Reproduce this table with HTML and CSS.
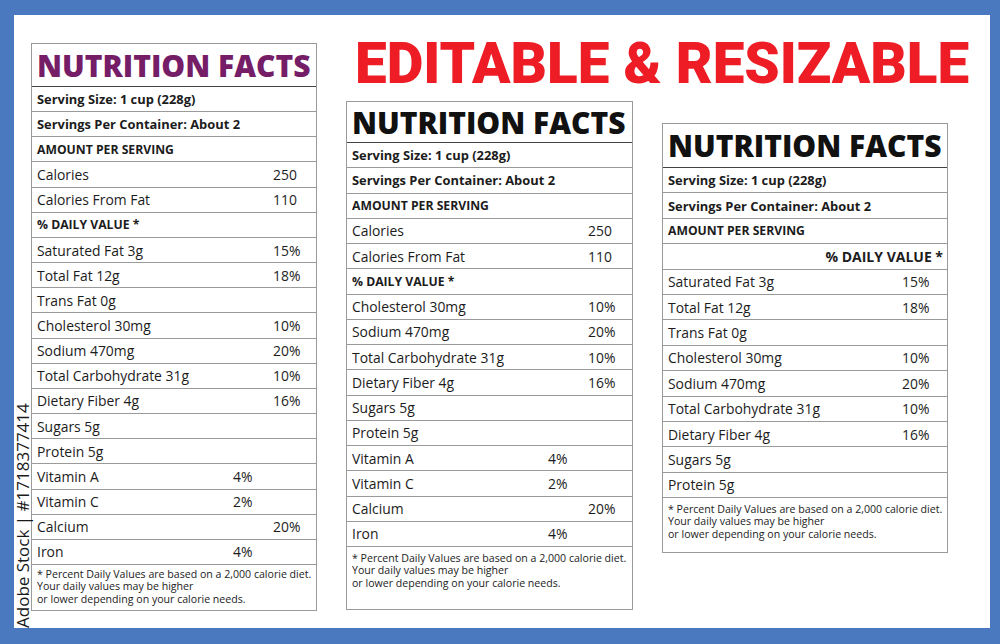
FILE: index.html
```html
<!DOCTYPE html>
<html lang="en">
<head>
<meta charset="utf-8">
<title>Nutrition Facts</title>
<link rel="stylesheet" href="styles.css">
</head>
<body>
<div class="frame">
  <section class="label l1">
    <h2 class="title purple">NUTRITION FACTS</h2>
    <div class="row b">Serving Size: 1 cup (228g)</div>
    <div class="row b">Servings Per Container: About 2</div>
    <div class="row b caps">AMOUNT PER SERVING</div>
    <div class="row"><span>Calories</span><span>250</span></div>
    <div class="row"><span>Calories From Fat</span><span>110</span></div>
    <div class="row b caps">% DAILY VALUE *</div>
    <div class="row"><span>Saturated Fat 3g</span><span>15%</span></div>
    <div class="row"><span>Total Fat 12g</span><span>18%</span></div>
    <div class="row"><span>Trans Fat 0g</span></div>
    <div class="row"><span>Cholesterol 30mg</span><span>10%</span></div>
    <div class="row"><span>Sodium 470mg</span><span>20%</span></div>
    <div class="row"><span>Total Carbohydrate 31g</span><span>10%</span></div>
    <div class="row"><span>Dietary Fiber 4g</span><span>16%</span></div>
    <div class="row"><span>Sugars 5g</span></div>
    <div class="row"><span>Protein 5g</span></div>
    <div class="row vit"><span>Vitamin A</span><span>4%</span></div>
    <div class="row vit"><span>Vitamin C</span><span>2%</span></div>
    <div class="row"><span>Calcium</span><span>20%</span></div>
    <div class="row vit"><span>Iron</span><span>4%</span></div>
    <p class="foot">* Percent Daily Values are based on a 2,000 calorie diet.<br>Your daily values may be higher<br>or lower depending on your calorie needs.</p>
  </section>
  <div class="right">
    <h1 class="headline">EDITABLE &amp; RESIZABLE</h1>
    <div class="pair">
      <section class="label l2">
        <h2 class="title">NUTRITION FACTS</h2>
        <div class="row b">Serving Size: 1 cup (228g)</div>
        <div class="row b">Servings Per Container: About 2</div>
        <div class="row b caps">AMOUNT PER SERVING</div>
        <div class="row"><span>Calories</span><span>250</span></div>
        <div class="row"><span>Calories From Fat</span><span>110</span></div>
        <div class="row b caps">% DAILY VALUE *</div>
        <div class="row"><span>Cholesterol 30mg</span><span>10%</span></div>
        <div class="row"><span>Sodium 470mg</span><span>20%</span></div>
        <div class="row"><span>Total Carbohydrate 31g</span><span>10%</span></div>
        <div class="row"><span>Dietary Fiber 4g</span><span>16%</span></div>
        <div class="row"><span>Sugars 5g</span></div>
        <div class="row"><span>Protein 5g</span></div>
        <div class="row vit"><span>Vitamin A</span><span>4%</span></div>
        <div class="row vit"><span>Vitamin C</span><span>2%</span></div>
        <div class="row"><span>Calcium</span><span>20%</span></div>
        <div class="row vit"><span>Iron</span><span>4%</span></div>
        <p class="foot">* Percent Daily Values are based on a 2,000 calorie diet.<br>Your daily values may be higher<br>or lower depending on your calorie needs.</p>
      </section>
      <section class="label l3">
        <h2 class="title">NUTRITION FACTS</h2>
        <div class="row b">Serving Size: 1 cup (228g)</div>
        <div class="row b">Servings Per Container: About 2</div>
        <div class="row b caps">AMOUNT PER SERVING</div>
        <div class="row b dv">% DAILY VALUE *</div>
        <div class="row"><span>Saturated Fat 3g</span><span>15%</span></div>
        <div class="row"><span>Total Fat 12g</span><span>18%</span></div>
        <div class="row"><span>Trans Fat 0g</span></div>
        <div class="row"><span>Cholesterol 30mg</span><span>10%</span></div>
        <div class="row"><span>Sodium 470mg</span><span>20%</span></div>
        <div class="row"><span>Total Carbohydrate 31g</span><span>10%</span></div>
        <div class="row"><span>Dietary Fiber 4g</span><span>16%</span></div>
        <div class="row"><span>Sugars 5g</span></div>
        <div class="row"><span>Protein 5g</span></div>
        <p class="foot">* Percent Daily Values are based on a 2,000 calorie diet.<br>Your daily values may be higher<br>or lower depending on your calorie needs.</p>
      </section>
    </div>
  </div>
</div>
<div class="stock">Adobe Stock | #1718377414</div>
</body>
</html>
```
FILE: styles.css
```css
html, body {
  margin: 0;
  padding: 0;
}
body {
  width: 1000px;
  height: 644px;
  overflow: hidden;
  background: #4a79bf;
  font-family: "Open Sans", "Liberation Sans", sans-serif;
  color: #1c1c1c;
  position: relative;
}
.frame {
  margin: 15px 10px 0 14px;
  height: 613px;
  background: #fff;
  display: flex;
  align-items: flex-start;
}
.label {
  box-sizing: border-box;
  width: 286px;
  border: 1px solid #9a9a9a;
  background: #fff;
}
.l1 { margin: 28px 0 0 17px; }
.l2 { width: 287px; }
.l3 { margin: 22px 0 0 29px; }
.right {
  margin-left: 29px;
  display: flex;
  flex-direction: column;
}
.headline {
  margin: 0;
  height: 86px;
  box-sizing: border-box;
  padding: 21px 0 0 9px;
  font-family: "Roboto", sans-serif;
  font-weight: 900;
  font-size: 56.6px;
  line-height: 1;
  color: #ee1c25;
  white-space: nowrap;
}
.pair {
  display: flex;
  align-items: flex-start;
}
.title {
  margin: 0;
  box-sizing: border-box;
  height: 43px;
  padding: 0 0 0 5px;
  display: flex;
  align-items: center;
  font-family: "Open Sans", sans-serif;
  font-weight: 800;
  font-size: 30px;
  letter-spacing: 0;
  color: #111;
  border-bottom: 1.5px solid #444;
  white-space: nowrap;
}
.l2 .title { height: 41px; }
.l3 .title { height: 44px; }
.purple { color: #761d67; }
.row {
  box-sizing: border-box;
  height: 25.16px;
  border-bottom: 1px solid #9a9a9a;
  padding-left: 5px;
  display: grid;
  grid-template-columns: 236px 1fr;
  align-items: center;
  font-size: 13.9px;
  white-space: nowrap;
}
.l2 .row { height: 25.25px; }
.l3 .row { height: 25.4px; grid-template-columns: 234px 1fr; }
.row.vit { grid-template-columns: 196px 1fr; }
.row.b {
  display: flex;
  font-weight: 700;
  font-size: 12.9px;
}
.row.caps { font-size: 12.2px; }
.row.dv {
  justify-content: flex-end;
  padding-right: 4px;
  font-size: 14px;
}
.foot {
  margin: 0;
  padding: 3px 4px 0 5px;
  font-size: 10.6px;
  line-height: 12.4px;
  color: #222;
  white-space: nowrap;
}
.l1 .foot { height: 45px; box-sizing: border-box; }
.l2 .foot { height: 62px; box-sizing: border-box; padding-top: 5px; }
.l3 .foot { height: 54px; box-sizing: border-box; padding-top: 5px; }
.stock {
  position: absolute;
  left: 13px;
  top: 408px;
  height: 220px;
  writing-mode: vertical-rl;
  transform: rotate(180deg);
  font-family: "Open Sans", sans-serif;
  font-weight: 500;
  font-size: 17px;
  line-height: 19px;
  color: #1a1a1a;
  white-space: nowrap;
}
```
